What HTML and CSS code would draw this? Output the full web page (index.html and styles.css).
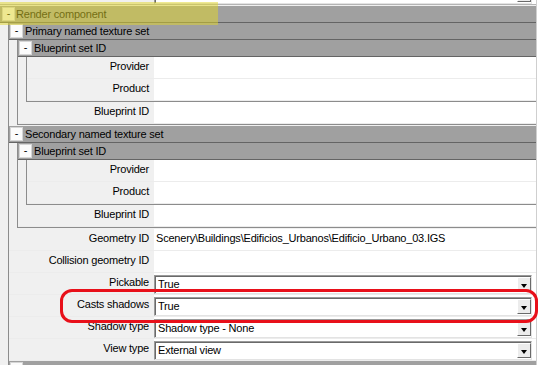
FILE: index.html
```html
<!DOCTYPE html>
<html lang="en">
<head>
  <meta charset="UTF-8">
  <title>Render component</title>
  <link rel="stylesheet" href="styles.css">
</head>
<body>
<div class="page">
  <div class="grid">
    <!-- tail of the property above, cut off by the window -->
    <div class="row stub">
      <div class="label"></div>
      <div class="value with-combo">
        <div class="combo"><span class="combo-text"></span><span class="drop"></span></div>
      </div>
    </div>

    <div class="group top">
      <div class="group-head"><span class="toggle">-</span><span class="title">Render component</span></div>
      <div class="group-body">

        <div class="group">
          <div class="group-head"><span class="toggle">-</span><span class="title">Primary named texture set</span></div>
          <div class="group-body">
            <div class="group">
              <div class="group-head"><span class="toggle">-</span><span class="title">Blueprint set ID</span></div>
              <div class="group-body">
                <div class="row"><div class="label">Provider</div><div class="value"></div></div>
                <div class="row"><div class="label">Product</div><div class="value"></div></div>
              </div>
            </div>
            <div class="row"><div class="label">Blueprint ID</div><div class="value"></div></div>
          </div>
        </div>

        <div class="group">
          <div class="group-head"><span class="toggle">-</span><span class="title">Secondary named texture set</span></div>
          <div class="group-body">
            <div class="group">
              <div class="group-head"><span class="toggle">-</span><span class="title">Blueprint set ID</span></div>
              <div class="group-body">
                <div class="row"><div class="label">Provider</div><div class="value"></div></div>
                <div class="row"><div class="label">Product</div><div class="value"></div></div>
              </div>
            </div>
            <div class="row"><div class="label">Blueprint ID</div><div class="value"></div></div>
          </div>
        </div>

        <div class="row"><div class="label">Geometry ID</div><div class="value">Scenery\Buildings\Edificios_Urbanos\Edificio_Urbano_03.IGS</div></div>
        <div class="row"><div class="label">Collision geometry ID</div><div class="value"></div></div>
        <div class="row">
          <div class="label">Pickable</div>
          <div class="value with-combo"><div class="combo"><span class="combo-text">True</span><span class="drop"></span></div></div>
        </div>
        <div class="row">
          <div class="label">Casts shadows</div>
          <div class="value with-combo"><div class="combo"><span class="combo-text">True</span><span class="drop"></span></div></div>
        </div>
        <div class="row">
          <div class="label">Shadow type</div>
          <div class="value with-combo"><div class="combo"><span class="combo-text">Shadow type - None</span><span class="drop"></span></div></div>
        </div>
        <div class="row">
          <div class="label">View type</div>
          <div class="value with-combo"><div class="combo"><span class="combo-text">External view</span><span class="drop"></span></div></div>
        </div>

        <!-- next group, only its top edge is in view -->
        <div class="group">
          <div class="group-head"><span class="toggle"></span></div>
        </div>

      </div>
    </div>
  </div>

  <div class="highlight"></div>
  <div class="callout"></div>
</div>
</body>
</html>
```

FILE: styles.css
```css
body {
  margin: 0;
  font-family: "Liberation Sans", Arial, sans-serif;
  font-size: 11px;
  letter-spacing: -0.2px;
  color: #000;
  background: #fff;
}
.page {
  position: relative;
  width: 539px;
  height: 365px;
  overflow: hidden;
}
.grid {
  width: 536px;
  height: 365px;
  overflow: hidden;
  background: #f0f0f0;
  border-right: 1px solid #cfcfcf;
}

/* groups */
.group-head {
  display: flex;
  align-items: center;
  height: 17px;
  box-sizing: border-box;
  background: #a0a0a0;
  border-bottom: 1px solid #646464;
  line-height: 15px;
  white-space: nowrap;
}
.toggle {
  width: 13px;
  height: 14px;
  box-sizing: border-box;
  margin: 0 2px 0 1px;
  background: #fbfbfb;
  border: 1px solid #d6d6d6;
  text-align: center;
  line-height: 11px;
  letter-spacing: 0;
}
.top > .group-head .toggle {
  margin-left: 2px;
  margin-right: 1px;
}
.group-body {
  margin-left: 8px;
  border-left: 1px solid #8c8c8c;
  border-bottom: 1px solid #8c8c8c;
}
.top > .group-body > .group {
  margin-bottom: 1px;
}

/* property rows */
.row {
  display: flex;
  height: 22px;
  box-sizing: border-box;
  border-bottom: 1px solid #ececec;
}
.label {
  flex: 1;
  padding: 2px 5px 0 0;
  text-align: right;
  line-height: 14px;
  white-space: nowrap;
}
.value {
  flex: 0 0 382px;
  box-sizing: border-box;
  padding: 2px 0 0 2px;
  background: #fff;
  line-height: 14px;
  white-space: nowrap;
  overflow: hidden;
}
.value.with-combo {
  padding: 2px 4px 0 0;
}
.stub {
  height: 5px;
  overflow: hidden;
  margin-bottom: 1px;
  border-bottom-color: #b4b4b4;
}
.stub .combo {
  margin-top: -17px;
}

/* combo boxes */
.combo {
  display: flex;
  height: 19px;
  box-sizing: border-box;
  border: 1px solid;
  border-color: #9a9a9a #e3e3e3 #e3e3e3 #9a9a9a;
  box-shadow: inset 1px 1px 0 #6a6a6a;
  padding: 1px 0 1px 3px;
}
.combo-text {
  flex: 1;
  line-height: 15px;
}
.drop {
  display: flex;
  align-items: center;
  justify-content: center;
  width: 14px;
  box-sizing: border-box;
  padding-top: 2px;
  background: #ececec;
  border: 1px solid;
  border-color: #fff #6a6a6a #6a6a6a #fff;
}
.drop::after {
  content: "";
  border-left: 3.5px solid transparent;
  border-right: 3.5px solid transparent;
  border-top: 4px solid #000;
}

/* annotations drawn over the screenshot */
.highlight {
  position: absolute;
  left: 0;
  top: 2px;
  width: 218px;
  height: 23px;
  background: rgba(226, 214, 40, 0.5);
}
.callout {
  position: absolute;
  left: 60px;
  top: 289px;
  width: 478px;
  height: 34px;
  box-sizing: border-box;
  border: 3px solid #e8101a;
  border-radius: 12px;
}
```
